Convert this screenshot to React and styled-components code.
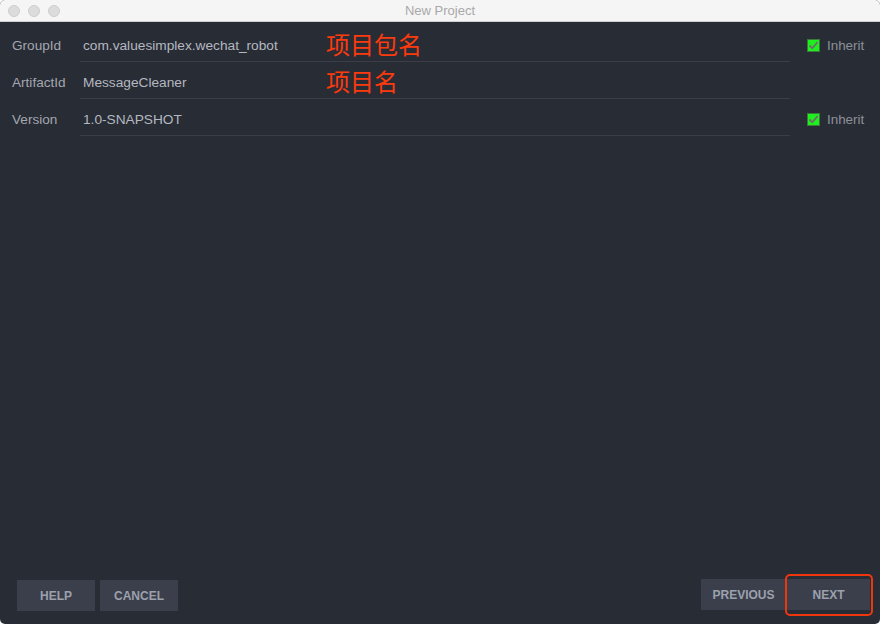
import React from "react";
import styled, { createGlobalStyle } from "styled-components";

const Global = createGlobalStyle`
  html, body { margin: 0; padding: 0; background: #ffffff; }
  body { font-family: "Liberation Sans", Arial, sans-serif; }
`;

const Window = styled.div`
  width: 880px;
  height: 624px;
  display: flex;
  flex-direction: column;
  background: #282c35;
  border-radius: 5px;
  overflow: hidden;
`;

const TitleBar = styled.div`
  height: 21px;
  flex: 0 0 21px;
  background: #f5f5f5;
  border-bottom: 1px solid #cfcfcf;
  display: flex;
  align-items: center;
  position: relative;
  padding-left: 8px;
  gap: 8px;
`;

const Light = styled.span`
  width: 12px;
  height: 12px;
  border-radius: 50%;
  background: #dcdcdc;
  border: 0.5px solid #cdcdcd;
  box-sizing: border-box;
`;

const Title = styled.div`
  position: absolute;
  left: 0;
  right: 0;
  top: 0;
  line-height: 22px;
  text-align: center;
  font-size: 13px;
  color: #a9a9a9;
`;

const Form = styled.div`
  flex: 1;
  display: flex;
  flex-direction: column;
  padding-top: 3px;
`;

const Row = styled.div`
  display: flex;
  align-items: stretch;
  height: 37px;
`;

const Label = styled.div`
  width: 80px;
  padding-left: 12px;
  box-sizing: border-box;
  display: flex;
  align-items: center;
  font-size: 13.6px;
  color: #a3a7af;
  padding-top: 4px;
`;

const Field = styled.div`
  width: 710px;
  border-bottom: 1px solid #3a3e49;
  display: flex;
  align-items: center;
  padding-left: 3px;
  box-sizing: border-box;
  padding-top: 5px;
`;

const Value = styled.span`
  font-size: 13.7px;
  color: #b4b8c0;
  width: 243px;
`;

const Note = styled.span`
  font-family: "Noto Sans CJK SC", sans-serif;
  font-size: 24px;
  color: #fb3a0e;
  line-height: 1;
  margin-top: -4px;
`;

const InheritCell = styled.label`
  display: flex;
  align-items: center;
  padding-left: 17px;
  gap: 7px;
  font-size: 13.4px;
  color: #8c9098;
  padding-top: 4px;
`;

const Box = styled.span`
  width: 13px;
  height: 13px;
  background: #1ef01e;
  border: 1px solid #3b7a3b;
  box-sizing: border-box;
  display: flex;
  align-items: center;
  justify-content: center;
`;

const Spacer = styled.div`
  flex: 1;
`;

const Footer = styled.div`
  display: flex;
  align-items: flex-end;
  padding: 0 10px 13px 17px;
`;

const Group = styled.div`
  display: flex;
  align-items: center;
  gap: ${(p) => p.$gap}px;
  margin-bottom: ${(p) => p.$lift || 0}px;
`;

const Button = styled.button`
  position: relative;
  height: 31px;
  width: ${(p) => p.$w}px;
  background: #3b3f4b;
  border: none;
  color: #9ca1ad;
  font-family: "Liberation Sans", Arial, sans-serif;
  font-weight: bold;
  font-size: 12px;
  padding: 0;
  cursor: default;

  ${(p) =>
    p.$marked &&
    `
    &::after {
      content: "";
      position: absolute;
      left: -2px;
      right: -3px;
      top: -5px;
      bottom: -6px;
      border: 2px solid #f0360c;
      border-radius: 5px;
    }
  `}
`;

function Check() {
  return (
    <Box>
      <svg width="11" height="11" viewBox="0 0 11 11">
        <path d="M1.5 5.5 L4.3 8.3 L9.6 2.2" fill="none" stroke="#6b6e6b" strokeWidth="1.8" />
      </svg>
    </Box>
  );
}

const rows = [
  { label: "GroupId", value: "com.valuesimplex.wechat_robot", note: "项目包名", inherit: true },
  { label: "ArtifactId", value: "MessageCleaner", note: "项目名", inherit: false },
  { label: "Version", value: "1.0-SNAPSHOT", note: "", inherit: true },
];

export default function App() {
  return (
    <>
      <Global />
      <Window>
        <TitleBar>
          <Light />
          <Light />
          <Light />
          <Title>New Project</Title>
        </TitleBar>
        <Form>
          {rows.map((r) => (
            <Row key={r.label}>
              <Label>{r.label}</Label>
              <Field>
                <Value>{r.value}</Value>
                {r.note && <Note>{r.note}</Note>}
              </Field>
              {r.inherit && (
                <InheritCell>
                  <Check />
                  Inherit
                </InheritCell>
              )}
            </Row>
          ))}
        </Form>
        <Footer>
          <Group $gap={5}>
            <Button $w={78}>HELP</Button>
            <Button $w={78}>CANCEL</Button>
          </Group>
          <Spacer />
          <Group $gap={1} $lift={1}>
            <Button $w={85}>PREVIOUS</Button>
            <Button $w={83} $marked>
              NEXT
            </Button>
          </Group>
        </Footer>
      </Window>
    </>
  );
}
